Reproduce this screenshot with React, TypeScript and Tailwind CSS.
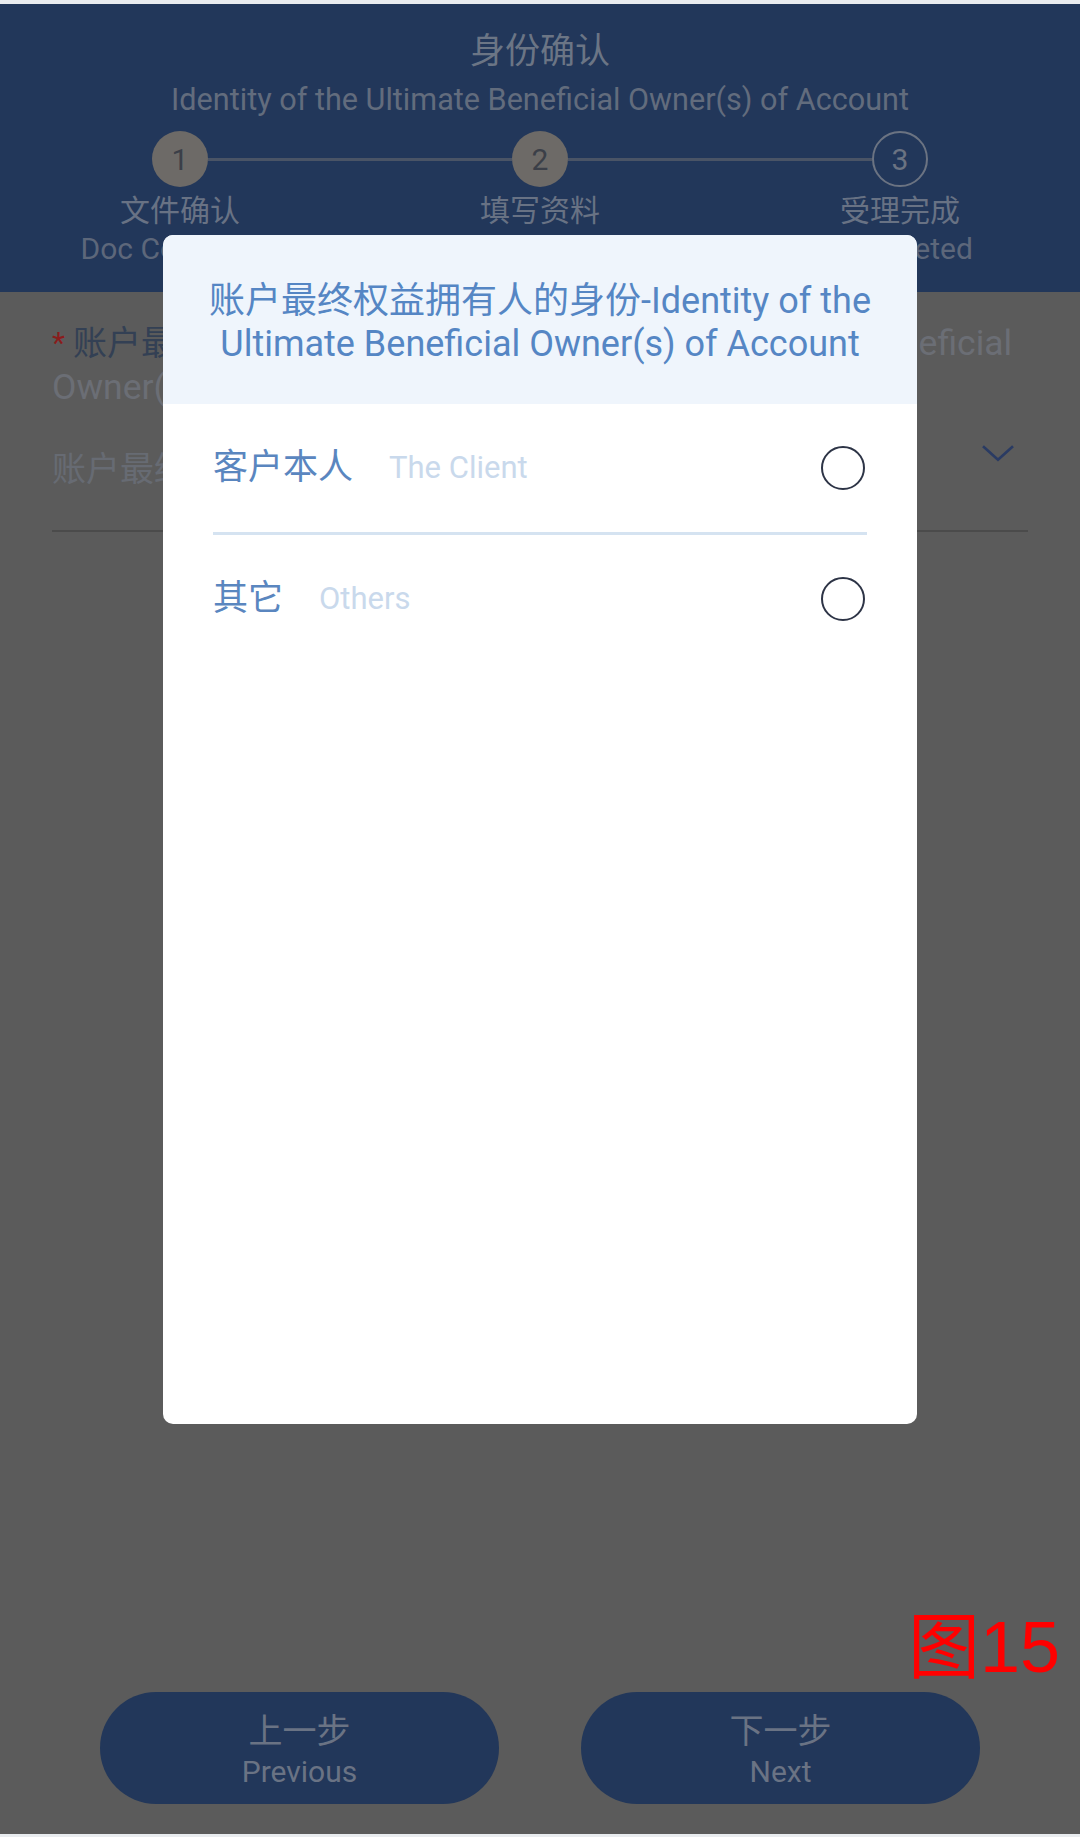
import { useState } from "react";

type Step = { n: number; zh: string; en: string; done: boolean };

const steps: Step[] = [
  { n: 1, zh: "文件确认", en: "Doc Confirmed", done: true },
  { n: 2, zh: "填写资料", en: "Fill in Info", done: true },
  { n: 3, zh: "受理完成", en: "Completed", done: false },
];

const options = [
  { id: "self", zh: "客户本人", en: "The Client" },
  { id: "other", zh: "其它", en: "Others" },
];

function StepCircle({ step }: { step: Step }) {
  return (
    <div
      className={
        step.done
          ? "grid size-[56px] shrink-0 place-items-center rounded-full bg-[#6d6a67] text-[30px] text-[#3b3f48]"
          : "grid size-[56px] shrink-0 place-items-center rounded-full border-2 border-[#6b7382] text-[30px] text-[#6b7382]"
      }
    >
      {step.n}
    </div>
  );
}

function Radio({ checked }: { checked: boolean }) {
  return (
    <span className="mr-[2px] grid size-[44px] shrink-0 place-items-center rounded-full border-2 border-[#2d3446]">
      {checked ? <span className="size-[24px] rounded-full bg-[#4a7fc1]" /> : null}
    </span>
  );
}

export default function App() {
  const [picked, setPicked] = useState<string | null>(null);

  return (
    <div className="relative flex min-h-[1837px] w-[1080px] flex-col overflow-hidden bg-[#5b5b5b] font-[Roboto,'Noto_Sans_CJK_SC',sans-serif]">
      <div className="h-[4px] bg-[#e9ecef]" />

      {/* page header with stepper */}
      <header className="flex h-[288px] flex-col bg-[#22375a] pt-[28px]">
        <h1 className="text-center text-[35px] leading-[40px] text-[#6b7585]">身份确认</h1>
        <p className="mt-[10px] text-center text-[30.6px] leading-[36px] text-[#626c7d]">
          Identity of the Ultimate Beneficial Owner(s) of Account
        </p>
        <div className="mt-[13px] flex items-center px-[152px]">
          <StepCircle step={steps[0]} />
          <div className="h-[3px] flex-1 bg-[#4a5466]" />
          <StepCircle step={steps[1]} />
          <div className="h-[3px] flex-1 bg-[#4a5466]" />
          <StepCircle step={steps[2]} />
        </div>
        <div className="mt-[4px] grid grid-cols-3 text-center">
          {steps.map((s) => (
            <div key={s.n} className="flex flex-col">
              <span className="text-[30px] leading-[40px] text-[#687284]">{s.zh}</span>
              <span className="text-[30px] leading-[36px] text-[#5d677a]">{s.en}</span>
            </div>
          ))}
        </div>
      </header>

      {/* form behind the dialog */}
      <section className="pt-[29px] pr-[46px] pl-[52px]">
        <p className="leading-[44px]">
          <span className="mr-[4px] align-top text-[30px] text-[#8a1c1c]">*</span>{" "}
          <span className="align-top text-[34px] text-[#334054]">账户最终权益拥有人的身份</span>
          <span className="align-top text-[35.5px] text-[#6b6e75]">-Identity of the Ultimate Beneficial Owner(s) of Account</span>
        </p>
        <div className="mr-[6px] flex items-center justify-between border-b-2 border-[#4b4b4b] pt-[38px] pb-[39px]">
          <span className="text-[34px] leading-[44px] text-[#676b73]">账户最终权益拥有人的身份</span>
          <svg className="-mt-[32px] mr-[10px] size-[40px]" viewBox="0 0 24 24" fill="none" stroke="#2a3b63" strokeWidth="1.6">
            <path d="M3 8l9 8 9-8" />
          </svg>
        </div>
      </section>

      <div className="flex-1" />

      <div className="flex gap-[82px] px-[100px] pb-[30px]">
        <button type="button" className="flex h-[112px] flex-1 flex-col items-center justify-center rounded-full bg-[#22375a] pt-[5px] text-[#6a7384]">
          <span className="text-[34px] leading-[42px]">上一步</span>
          <span className="text-[30px] leading-[40px]">Previous</span>
        </button>
        <button type="button" className="flex h-[112px] flex-1 flex-col items-center justify-center rounded-full bg-[#22375a] pt-[5px] text-[#6a7384]">
          <span className="text-[34px] leading-[42px]">下一步</span>
          <span className="text-[30px] leading-[40px]">Next</span>
        </button>
      </div>
      <div className="h-[3px] bg-[#e9ecef]" />

      {/* figure annotation */}
      <span className="absolute top-[1599px] left-[908px] font-['Liberation_Sans','Noto_Sans_CJK_SC',sans-serif] text-[72px] leading-[96px] text-[#ff0000]">
        图15
      </span>

      {/* dialog */}
      <div className="absolute top-[235px] left-[163px] flex h-[1189px] w-[754px] flex-col overflow-hidden rounded-[10px] bg-white">
        <div className="flex h-[169px] items-center justify-center bg-[#eff5fc] px-[40px] pt-[6px]">
          <h2 className="text-center text-[36px] leading-[43px] text-[#5586c4]">
            账户最终权益拥有人的身份-Identity of the Ultimate Beneficial Owner(s) of Account
          </h2>
        </div>
        <div className="flex flex-col px-[50px]">
          {options.map((o, i) => (
            <button
              key={o.id}
              type="button"
              onClick={() => setPicked(o.id)}
              className={
                i < options.length - 1
                  ? "flex h-[131px] items-center border-b-[3px] border-[#d5e3f1] text-left"
                  : "flex h-[128px] items-center text-left"
              }
            >
              <span className="text-[35px] leading-[44px] text-[#5a86bf]">{o.zh}</span>
              <span className="ml-[36px] flex-1 text-[31px] leading-[44px] text-[#c9d9ec]">{o.en}</span>
              <Radio checked={picked === o.id} />
            </button>
          ))}
        </div>
      </div>
    </div>
  );
}
